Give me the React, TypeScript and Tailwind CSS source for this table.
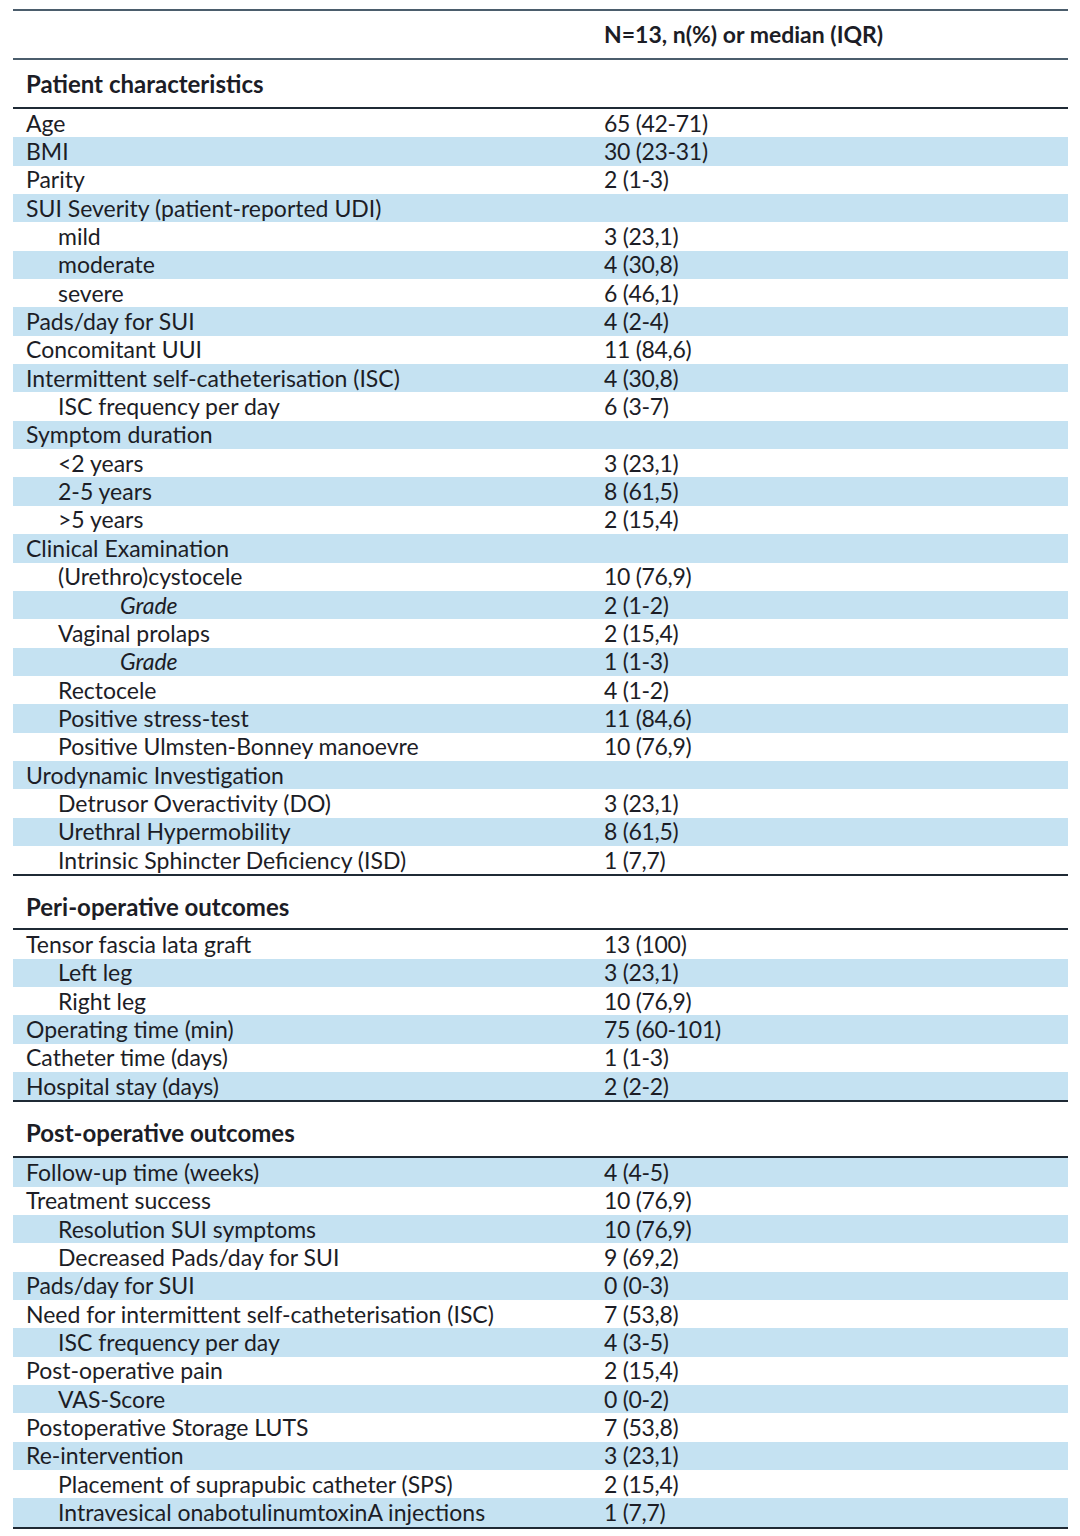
import React from "react";

type Row = { label: string; value: string; indent?: 0 | 1 | 2; italic?: boolean };
type Section = { title: string; h: string; rows: Row[] };

const sections: Section[] = [
  {
    title: "Patient characteristics",
    h: "h-[47px]",
    rows: [
      { label: "Age", value: "65 (42-71)" },
      { label: "BMI", value: "30 (23-31)" },
      { label: "Parity", value: "2 (1-3)" },
      { label: "SUI Severity (patient-reported UDI)", value: "" },
      { label: "mild", value: "3 (23,1)", indent: 1 },
      { label: "moderate", value: "4 (30,8)", indent: 1 },
      { label: "severe", value: "6 (46,1)", indent: 1 },
      { label: "Pads/day for SUI", value: "4 (2-4)" },
      { label: "Concomitant UUI", value: "11 (84,6)" },
      { label: "Intermittent self-catheterisation (ISC)", value: "4 (30,8)" },
      { label: "ISC frequency per day", value: "6 (3-7)", indent: 1 },
      { label: "Symptom duration", value: "" },
      { label: "<2 years", value: "3 (23,1)", indent: 1 },
      { label: "2-5 years", value: "8 (61,5)", indent: 1 },
      { label: ">5 years", value: "2 (15,4)", indent: 1 },
      { label: "Clinical Examination", value: "" },
      { label: "(Urethro)cystocele", value: "10 (76,9)", indent: 1 },
      { label: "Grade", value: "2 (1-2)", indent: 2, italic: true },
      { label: "Vaginal prolaps", value: "2 (15,4)", indent: 1 },
      { label: "Grade", value: "1 (1-3)", indent: 2, italic: true },
      { label: "Rectocele", value: "4 (1-2)", indent: 1 },
      { label: "Positive stress-test", value: "11 (84,6)", indent: 1 },
      { label: "Positive Ulmsten-Bonney manoevre", value: "10 (76,9)", indent: 1 },
      { label: "Urodynamic Investigation", value: "" },
      { label: "Detrusor Overactivity (DO)", value: "3 (23,1)", indent: 1 },
      { label: "Urethral Hypermobility", value: "8 (61,5)", indent: 1 },
      { label: "Intrinsic Sphincter Deficiency (ISD)", value: "1 (7,7)", indent: 1 },
    ],
  },
  {
    title: "Peri-operative outcomes",
    h: "h-[52px] pt-[10px]",
    rows: [
      { label: "Tensor fascia lata graft", value: "13 (100)" },
      { label: "Left leg", value: "3 (23,1)", indent: 1 },
      { label: "Right leg", value: "10 (76,9)", indent: 1 },
      { label: "Operating time (min)", value: "75 (60-101)" },
      { label: "Catheter time (days)", value: "1 (1-3)" },
      { label: "Hospital stay (days)", value: "2 (2-2)" },
    ],
  },
  {
    title: "Post-operative outcomes",
    h: "h-[54px] pt-[8px]",
    rows: [
      { label: "Follow-up time (weeks)", value: "4 (4-5)" },
      { label: "Treatment success", value: "10 (76,9)" },
      { label: "Resolution SUI symptoms", value: "10 (76,9)", indent: 1 },
      { label: "Decreased Pads/day for SUI", value: "9 (69,2)", indent: 1 },
      { label: "Pads/day for SUI", value: "0 (0-3)" },
      { label: "Need for intermittent self-catheterisation (ISC)", value: "7 (53,8)" },
      { label: "ISC frequency per day", value: "4 (3-5)", indent: 1 },
      { label: "Post-operative pain", value: "2 (15,4)" },
      { label: "VAS-Score", value: "0 (0-2)", indent: 1 },
      { label: "Postoperative Storage LUTS", value: "7 (53,8)" },
      { label: "Re-intervention", value: "3 (23,1)" },
      { label: "Placement of suprapubic catheter (SPS)", value: "2 (15,4)", indent: 1 },
      { label: "Intravesical onabotulinumtoxinA injections", value: "1 (7,7)", indent: 1 },
    ],
  },
];

const indentCls = ["pl-[13px]", "pl-[45px]", "pl-[107px]"];

function DataRow({ row, shaded }: { row: Row; shaded: boolean }) {
  return (
    <div
      className={`grid grid-cols-[578px_1fr] h-[28.35px] items-center ${
        shaded ? "bg-[#c5e2f2]" : "bg-white"
      }`}
    >
      <div className={`${indentCls[row.indent ?? 0]} pr-2 whitespace-nowrap ${row.italic ? "italic" : ""}`}>
        {row.label}
      </div>
      <div className="pl-[13px] whitespace-nowrap tracking-[-0.3px]">{row.value}</div>
    </div>
  );
}

export default function App() {
  return (
    <div
      className="w-[1080px] h-[1536px] bg-white pt-[9px] text-[#1c1d26] text-[23px] leading-none"
      style={{ fontFamily: "Lato, 'Liberation Sans', sans-serif" }}
    >
      <div className="mx-[13px] w-[1055px]">
        <div className="h-[2px] bg-[#4b5d6c]" />
        <div className="grid grid-cols-[578px_1fr] h-[47px] items-center font-bold">
          <div />
          <div className="pl-[13px]">N=13, n(%) or median (IQR)</div>
        </div>
        <div className="h-[2px] bg-[#4b5d6c]" />
        {sections.map((s, si) => (
          <div key={si}>
            <div className={`${s.h} flex items-center pl-[13px] font-bold text-[24px]`}>{s.title}</div>
            <div className="h-[2px] bg-[#1f2a35]" />
            {s.rows.map((r, i) => (
              <DataRow key={i} row={r} shaded={si === 2 ? i % 2 === 0 : i % 2 === 1} />
            ))}
            <div className="h-[2px] bg-[#1f2a35]" />
          </div>
        ))}
      </div>
    </div>
  );
}
